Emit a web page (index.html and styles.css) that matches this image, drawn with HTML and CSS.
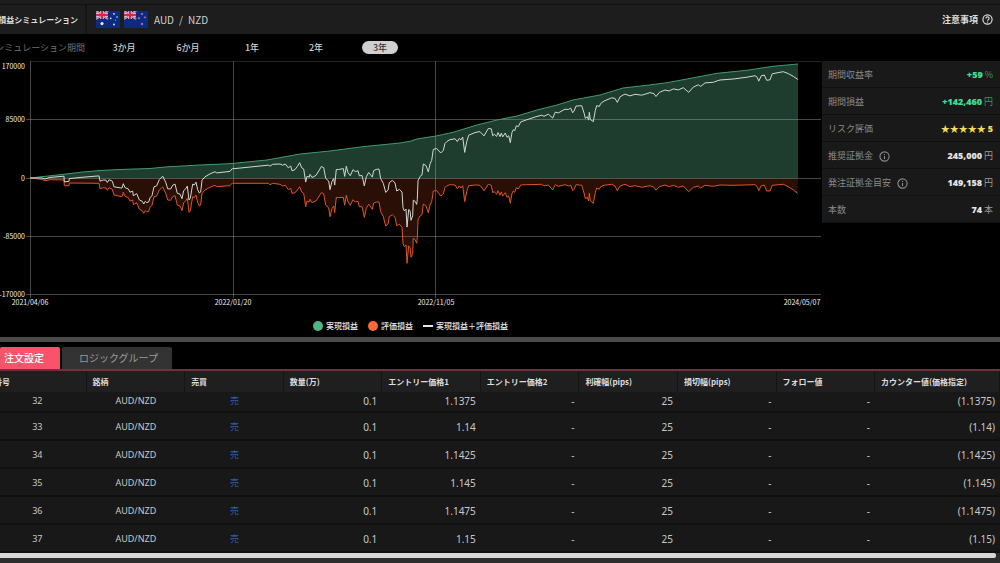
FILE: index.html
```html
<!DOCTYPE html>
<html lang="ja">
<head>
<meta charset="utf-8">
<meta name="viewport" content="width=device-width, initial-scale=1">
<title>損益シミュレーション</title>
<link rel="stylesheet" href="styles.css">
</head>
<body>
<div class="topstrip"></div>
<header class="header">
  <h1 class="header-title">損益シミュレーション</h1>
  <div class="pair">
    <svg class="flag" viewBox="0 0 24 17" aria-hidden="true">
      <rect width="24" height="17" fill="#0b2a80"/>
      <path d="M0 0L12 8M12 0L0 8" stroke="#dfe0ee" stroke-width="2"/>
      <path d="M6 0V8M0 4H12" stroke="#f0dfe8" stroke-width="3.4"/>
      <path d="M6 0V8M0 4H12" stroke="#dc2548" stroke-width="2"/>
      <path d="M0 0L12 8M12 0L0 8" stroke="#dc2548" stroke-width=".8"/>
      <g fill="#e8ecf8"><circle cx="6" cy="12.6" r="1.6"/><circle cx="18" cy="2.8" r=".9"/><circle cx="14.8" cy="7.4" r=".8"/><circle cx="21" cy="6" r=".8"/><circle cx="18" cy="13.5" r=".9"/><circle cx="19.4" cy="9" r=".5"/></g>
    </svg>
    <svg class="flag" viewBox="0 0 24 17" aria-hidden="true">
      <rect width="24" height="17" fill="#0b2a80"/>
      <path d="M0 0L12 8M12 0L0 8" stroke="#dfe0ee" stroke-width="2"/>
      <path d="M6 0V8M0 4H12" stroke="#f0dfe8" stroke-width="3.4"/>
      <path d="M6 0V8M0 4H12" stroke="#dc2548" stroke-width="2"/>
      <path d="M0 0L12 8M12 0L0 8" stroke="#dc2548" stroke-width=".8"/>
      <g fill="#d8284c" stroke="#c9cfe8" stroke-width=".4"><circle cx="18" cy="3" r=".8"/><circle cx="15" cy="7.2" r=".8"/><circle cx="21" cy="6.4" r=".7"/><circle cx="18" cy="13" r=".9"/></g>
    </svg>
    <span class="pair-name"><span>AUD</span><span>/</span><span>NZD</span></span>
  </div>
  <button type="button" class="notes">注意事項
    <svg class="icon-help" viewBox="0 0 24 24" fill="none" stroke="currentColor" stroke-width="2.6" aria-hidden="true"><circle cx="12" cy="12" r="10"/><path d="M8.6 9.6a3.4 3.4 0 1 1 5.2 2.9c-1.2.8-1.8 1.3-1.8 2.4"/><path d="M12 16.6v2.2"/></svg>
  </button>
</header>

<nav class="periods" aria-label="シミュレーション期間">
  <span class="periods-label">シミュレーション期間</span>
  <button type="button" class="period"><span>3か月</span></button>
  <button type="button" class="period"><span>6か月</span></button>
  <button type="button" class="period"><span>1年</span></button>
  <button type="button" class="period"><span>2年</span></button>
  <button type="button" class="period is-active" aria-pressed="true"><span>3年</span></button>
</nav>

<main class="overview">
  <section class="chart">
    <svg class="plot" viewBox="0 61 821 248" role="img" aria-label="損益チャート">
      <path id="gain-area" class="gain-area"/>
      <path id="loss-area" class="loss-area"/>
      <path class="grid grid-faint" d="M30 61.5H821"/>
      <path class="grid" d="M26 119.5H821M26 178.5H821M26 236.5H821M26 294.5H821M30.5 61V298M233.5 61V298M435.5 61V298"/>
      <path id="gain-line" class="line gain-line"/>
      <path id="loss-line" class="line loss-line"/>
      <path id="total-line" class="line total-line"/>
      <g class="axis axis-y"><text x="25" y="69">170000</text><text x="25" y="122">85000</text><text x="25" y="181">0</text><text x="25" y="239">-85000</text><text x="25" y="297">-170000</text></g>
      <g class="axis axis-x"><text x="30" y="305">2021/04/06</text><text x="233" y="305">2022/01/20</text><text x="436" y="305">2022/11/05</text><text x="802" y="305">2024/05/07</text></g>
    </svg>
    <ul class="legend">
      <li><i class="dot dot-gain"></i>実現損益</li>
      <li><i class="dot dot-loss"></i>評価損益</li>
      <li><i class="dash"></i>実現損益＋評価損益</li>
    </ul>
  </section>
  <dl class="stats">
    <div class="stat"><dt>期間収益率</dt><dd class="plus"><b>+59</b> %</dd></div>
    <div class="stat"><dt>期間損益</dt><dd class="plus"><b>+142,460</b> 円</dd></div>
    <div class="stat"><dt>リスク評価</dt><dd class="stars">★★★★★<b>5</b></dd></div>
    <div class="stat"><dt>推奨証拠金<svg class="icon-info" viewBox="0 0 24 24" fill="none" stroke="currentColor" stroke-width="2.4" aria-hidden="true"><circle cx="12" cy="12" r="10"/><path d="M12 11v6.5M12 6.5v2.2"/></svg></dt><dd><b>245,000</b> 円</dd></div>
    <div class="stat"><dt>発注証拠金目安<svg class="icon-info" viewBox="0 0 24 24" fill="none" stroke="currentColor" stroke-width="2.4" aria-hidden="true"><circle cx="12" cy="12" r="10"/><path d="M12 11v6.5M12 6.5v2.2"/></svg></dt><dd><b>149,158</b> 円</dd></div>
    <div class="stat"><dt>本数</dt><dd><b>74</b> 本</dd></div>
  </dl>
</main>

<div class="splitter"></div>

<section class="orders">
  <div class="tabs" role="tablist">
    <button type="button" role="tab" class="tab is-active" aria-selected="true">注文設定</button>
    <button type="button" role="tab" class="tab" aria-selected="false">ロジックグループ</button>
  </div>
  <div class="table-wrap">
    <table class="table">
      <colgroup><col class="col" span="9"><col></colgroup>
      <thead><tr><th>番号</th><th>銘柄</th><th>売買</th><th>数量(万)</th><th>エントリー価格1</th><th>エントリー価格2</th><th>利確幅(pips)</th><th>損切幅(pips)</th><th>フォロー値</th><th>カウンター値(価格指定)</th></tr></thead>
      <tbody>
        <tr class="row-first"><td>32</td><td>AUD/NZD</td><td>売</td><td>0.1</td><td>1.1375</td><td>-</td><td>25</td><td>-</td><td>-</td><td>(1.1375)</td></tr>
        <tr><td>33</td><td>AUD/NZD</td><td>売</td><td>0.1</td><td>1.14</td><td>-</td><td>25</td><td>-</td><td>-</td><td>(1.14)</td></tr>
        <tr><td>34</td><td>AUD/NZD</td><td>売</td><td>0.1</td><td>1.1425</td><td>-</td><td>25</td><td>-</td><td>-</td><td>(1.1425)</td></tr>
        <tr><td>35</td><td>AUD/NZD</td><td>売</td><td>0.1</td><td>1.145</td><td>-</td><td>25</td><td>-</td><td>-</td><td>(1.145)</td></tr>
        <tr><td>36</td><td>AUD/NZD</td><td>売</td><td>0.1</td><td>1.1475</td><td>-</td><td>25</td><td>-</td><td>-</td><td>(1.1475)</td></tr>
        <tr><td>37</td><td>AUD/NZD</td><td>売</td><td>0.1</td><td>1.15</td><td>-</td><td>25</td><td>-</td><td>-</td><td>(1.15)</td></tr>
      </tbody>
    </table>
  </div>
  <div class="scrollbar"><div class="scrollbar-thumb"></div></div>
</section>
<script src="chart.js"></script>
</body>
</html>
```
FILE: styles.css
```css
* { box-sizing: border-box; }

body {
  margin: 0;
  min-height: 100vh;
  display: flex;
  flex-direction: column;
  overflow: hidden;
  background: #000;
  color: #c8c8c8;
  font-family: "Noto Sans CJK JP", "Noto Sans", sans-serif;
  font-size: 9px;
  line-height: 12px;
}

button {
  margin: 0;
  padding: 0;
  border: 0;
  background: none;
  color: inherit;
  font: inherit;
  cursor: pointer;
}

.topstrip {
  height: 5px;
  background: #1c1c1c;
  border-bottom: 1px solid #111;
}

.header {
  display: flex;
  align-items: center;
  height: 29px;
  padding-right: 7px;
  background: #1d1d1d;
}

.header-title {
  display: flex;
  align-items: center;
  justify-content: flex-end;
  align-self: stretch;
  width: 87px;
  margin: 0;
  padding-right: 7px;
  border-right: 2px solid #151515;
  overflow: hidden;
  white-space: nowrap;
  color: #ddd;
  font-size: 8px;
  font-weight: 700;
}

.pair {
  display: flex;
  align-items: center;
  gap: 4px;
  margin-left: 9px;
}

.flag {
  width: 24px;
  height: 17px;
}

.pair-name {
  display: flex;
  gap: 5px;
  margin-left: 2px;
  color: #d0d0d0;
  font-size: 10px;
}

.notes {
  display: flex;
  align-items: center;
  gap: 4px;
  margin-left: auto;
  color: #ddd;
  font-weight: 700;
}

.icon-help { width: 11px; height: 11px; }

.periods {
  display: flex;
  align-items: center;
  height: 27px;
}

.periods-label {
  display: flex;
  justify-content: flex-end;
  width: 92px;
  padding-right: 7px;
  white-space: nowrap;
  color: #707070;
}

.period {
  display: flex;
  justify-content: center;
  width: 64px;
  color: #d0d0d0;
  font-weight: 500;
}

.period span {
  min-width: 36px;
  border-radius: 7px;
  line-height: 13px;
}

.period.is-active span {
  background: #d0d0d0;
  color: #333;
}

.overview {
  display: flex;
  align-items: flex-start;
  gap: 1px;
}

.chart { flex: 1; min-width: 0; }

.plot {
  display: block;
  width: 100%;
}

.gain-area { fill: #1e3d2f; }
.loss-area { fill: #2a0f07; }
.grid { fill: none; stroke: #b0b0b0; stroke-opacity: .4; }
.grid-faint { stroke-opacity: .2; }
.line { fill: none; stroke-linejoin: round; }
.gain-line { stroke: #3f9b73; }
.loss-line { stroke: #dd5527; }
.total-line { stroke: #d0d8d3; }
.axis { fill: #eee; font-size: 7px; }
.axis-y { text-anchor: end; }
.axis-x { text-anchor: middle; }

.legend {
  display: flex;
  justify-content: center;
  gap: 10px;
  margin: 0;
  padding: 11px 0 5px;
  list-style: none;
  color: #e6e6e6;
  font-size: 8px;
  font-weight: 500;
}

.legend li {
  display: flex;
  align-items: center;
  gap: 3px;
  height: 12px;
}

.dot {
  width: 10px;
  height: 10px;
  border-radius: 50%;
}

.dot-gain { background: #4fb587; }
.dot-loss { background: #ff6936; }
.dash { width: 10px; height: 2px; background: #e6e6e6; }

.stats {
  width: 178px;
  margin: 0;
}

.stat {
  display: flex;
  align-items: center;
  justify-content: space-between;
  height: 27px;
  padding: 2px 7px 0 6px;
  background: #191919;
  border-bottom: 1px solid #101010;
}

.stat dt {
  display: flex;
  align-items: center;
  gap: 6px;
  color: #8a8a8a;
}

.stat dd { margin: 0; color: #9c9c9c; }

.stat b {
  color: #e4e4e4;
  font-family: "Noto Sans", sans-serif;
  font-weight: 900;
}

.stat .plus { color: #2b9c69; }
.stat .plus b { color: #3be094; }
.stat .stars, .stat .stars b { color: #f2dc58; }
.stat .stars b { margin-left: 2px; }
.icon-info { width: 11px; height: 11px; }

.splitter {
  height: 5px;
  background: #4b4b4b;
}

.orders {
  flex: 1;
  display: flex;
  flex-direction: column;
}

.tabs {
  display: flex;
  gap: 2px;
  padding-top: 5px;
  border-bottom: 2px solid #74303a;
}

.tab {
  height: 22px;
  padding: 0 14px 0 17px;
  border-radius: 2px 2px 0 0;
  background: #333;
  color: #9a9a9a;
  font-size: 10px;
}

.tab.is-active {
  padding: 0 16px 0 4px;
  background: #f9536b;
  color: #fff;
  font-weight: 500;
}

.table-wrap { overflow: hidden; }

.table {
  width: calc(100% + 12px);
  margin-left: -12px;
  border-collapse: separate;
  border-spacing: 0;
  table-layout: fixed;
  background: #181818;
}

.col { width: 9.74%; }

.table th {
  height: 21px;
  padding: 1px 6px 0;
  border-right: 1px solid #151515;
  background: #1f1f1f;
  color: #ddd;
  font-size: 8px;
  font-weight: 700;
  text-align: left;
  white-space: nowrap;
}

.table td {
  height: 28px;
  padding: 2px 5px 0;
  border-bottom: 2px solid #101010;
  color: #c8c8c8;
  font-family: "Noto Sans", "Noto Sans CJK JP", sans-serif;
  font-size: 10px;
  text-align: right;
}

.table .row-first td {
  height: 21px;
  padding: 0 5px 2px;
}

.table td:nth-child(-n+3) {
  font-size: 9px;
  text-align: center;
}

.table td:nth-child(3) { color: #2b5ea8; }

.scrollbar {
  flex: 1;
  min-height: 10px;
  padding-right: 4px;
  background: #2c2c2c;
}

.scrollbar-thumb {
  height: 5px;
  border-radius: 0 2px 2px 0;
  background: #d6d6d6;
}
```
FILE: chart.js
```js
const ZERO = 178;

// Realised profit curve: x, y pairs.
const gain = [30,178,48,176,66,174,83,172,100,170.5,120,169.5,150,168.5,165,167,200,165,230,163.7,267,160,300,154,330,151,363,146.7,400,143,410,141.3,417,139,436,136,453,132.3,477,125,497,120,517,116,537,110,557,105,573,100,600,95,623,88,647,85.3,667,82.7,687,79,717,73.3,747,70.3,773,66.3,798,64];

// Unrealised loss curve, in thirds of a unit from each section's origin.
const sections = [
  { x: 0, y: 150, points: [90,84,125,88,135,92,150,89,192,90,193,107,207,107,208,99,297,100,300,116,310,113,318,114,322,121,327,113,337,118,342,135,366,140,370,127,375,139,385,143,390,153,398,150,400,164,410,158,418,177,427,182,431,190,436,182,440,186,446,184,450,172,456,166,462,140,470,138,478,120,488,111,497,130,503,150,512,151,518,140,525,137,532,165,540,168,546,182,551,158,557,153,562,145,567,187,571,182,578,140,583,143,588,135,593,158,598,168,602,165,606,130,615,120,630,112,645,106,650,110,690,107,697,99] },
  { x: 230, y: 130, points: [8,160,115,160,120,164,128,160,150,163,158,168,166,166,175,179,182,175,186,190,195,188,202,180,209,170,215,186,221,190,227,230,231,213,238,216,240,208,246,218,258,213,268,198,274,188,281,192,287,225,296,234,300,260,306,236,311,228,314,248,319,202,326,203,340,202,344,226,349,196,354,216,361,226,369,209,376,216,384,214,388,230,396,230,403,262,409,235,416,223,422,231,427,238,431,219,440,216,447,216,452,245,460,260,467,288,474,282,478,260,487,254,495,262,500,287,508,283,516,292,519,340,523,350,528,345,531,400,536,348,540,352,543,382,548,370,550,324,556,330,560,340,562,325,564,270,570,258,576,254,580,222,588,228,595,248,600,225,605,215,610,183,620,182,632,198,640,192,645,172,650,168] },
  { x: 400, y: 60, points: [150,374,165,375,172,386,178,378,183,384,188,377,194,425,200,395,206,377,225,375,240,376,252,392,265,373,274,376,278,398,283,395,290,403,294,392,300,406,304,396,308,408,316,398,321,412,326,408,331,430,336,400,340,393,344,397,349,383,355,387,362,375,380,374,425,373,432,378,445,375,458,390,466,374,475,379,495,374,505,378,512,376,518,392,522,388,528,374,545,376,553,402,556,416,562,412,566,423,568,400,571,422,580,430,586,398,590,384,598,388,602,380,612,376,635,373,645,378,652,392,660,378,675,373,690,380,705,377,725,382,750,377,762,382,768,391,778,380,795,375,808,380,820,376,835,382,850,378,866,395,880,382,895,378,902,384,915,376,940,379,960,375,1000,376,1065,374,1072,380,1076,392,1084,377,1093,376,1100,393,1110,393,1117,376,1150,373,1165,380,1180,390,1193,400] }
];

const pairs = list => list.reduce((out, v, i) => (i % 2 ? out[out.length - 1].push(v) : out.push([v]), out), []);
const gainPoints = pairs(gain);
const lossPoints = sections.flatMap(s => pairs(s.points).map(([x, y]) => [s.x + x / 3, s.y + y / 3]));

// Linear interpolation of a curve at x.
function valueAt(points, x) {
  for (let i = 1; i < points.length; i++) {
    const [x0, y0] = points[i - 1];
    const [x1, y1] = points[i];
    if (x <= x1) return y0 + (y1 - y0) * (x - x0) / (x1 - x0);
  }
  return points[points.length - 1][1];
}

// The total is realised profit plus unrealised loss.
const xs = [...new Set([...gainPoints, ...lossPoints].map(p => p[0]))].sort((a, b) => a - b);
const totalPoints = xs.map(x => [x, valueAt(gainPoints, x) + valueAt(lossPoints, x) - ZERO]);

const line = points => "M" + points.map(p => p.map(v => v.toFixed(1)).join(" ")).join("L");
const area = points => `${line(points)}V${ZERO}H30Z`;
const draw = (id, d) => document.getElementById(id).setAttribute("d", d);

draw("gain-area", area(gainPoints));
draw("loss-area", area(lossPoints));
draw("gain-line", line(gainPoints));
draw("loss-line", line(lossPoints));
draw("total-line", line(totalPoints));
```
